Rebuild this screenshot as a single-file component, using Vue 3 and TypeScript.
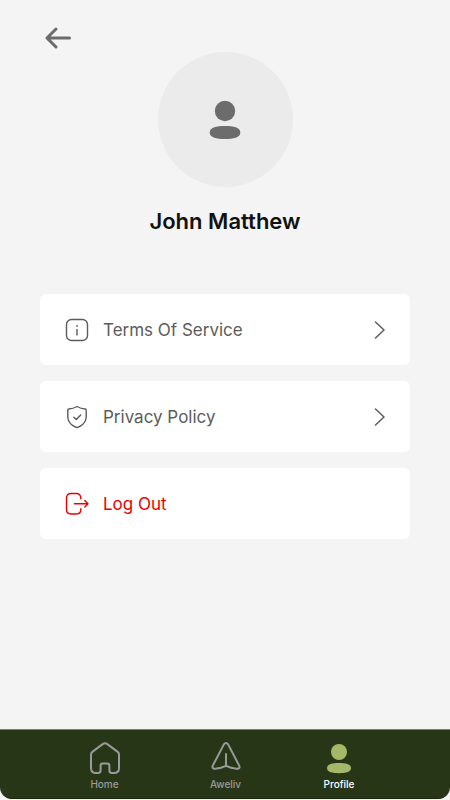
<script setup lang="ts">
import { ref } from 'vue'

type TabId = 'home' | 'aweliv' | 'profile'

interface Tab {
  id: TabId
  label: string
}

const userName = 'John Matthew'

const tabs: Tab[] = [
  { id: 'home', label: 'Home' },
  { id: 'aweliv', label: 'Aweliv' },
  { id: 'profile', label: 'Profile' },
]

const activeTab = ref<TabId>('profile')
</script>

<template>
  <div class="screen">
    <header class="top">
      <button class="back" type="button" aria-label="Back">
        <svg width="28" height="24" viewBox="0 0 28 24" fill="none" stroke="currentColor" stroke-width="3" stroke-linecap="round" stroke-linejoin="round">
          <path d="M25.5 12H3M12 3 3 12l9 9" />
        </svg>
      </button>
    </header>

    <main class="content">
      <section class="profile">
        <div class="avatar">
          <svg width="32" height="40" viewBox="0 0 32 40" fill="currentColor">
            <circle cx="16" cy="11" r="10.2" />
            <path d="M16 26c8.500 0 15.300 1.300 15.300 6.500S24.500 39 16 39 .7 37.700 .7 32.500 7.500 26 16 26Z" />
          </svg>
        </div>
        <h1 class="name">{{ userName }}</h1>
      </section>

      <nav class="menu" aria-label="Account">
        <a class="row" href="#terms">
          <svg class="row-icon" width="24" height="24" viewBox="0 0 24 24" fill="none" stroke="currentColor" stroke-width="1.4" stroke-linecap="round">
            <rect x="1.500" y="1.500" width="21" height="21" rx="5" />
            <path d="M12 11.500v5.500" />
            <circle cx="12" cy="7.900" r="0.900" fill="currentColor" stroke="none" />
          </svg>
          <span class="row-label">Terms Of Service</span>
          <svg class="chevron" width="12" height="18" viewBox="0 0 12 18" fill="none" stroke="currentColor" stroke-width="1.500" stroke-linecap="round" stroke-linejoin="round">
            <path d="m1.500 1 8.500 8-8.500 8" />
          </svg>
        </a>
        <a class="row" href="#privacy">
          <svg class="row-icon" width="24" height="24" viewBox="0 0 24 24" fill="none" stroke="currentColor" stroke-width="1.4" stroke-linecap="round" stroke-linejoin="round">
            <path d="M12 1.500c2.600 1.500 5.300 2.300 8.200 2.500q1 .1 1 1.100v7c0 5.200-4.600 9-9.200 10.600C7.400 21.100 2.800 17.300 2.800 12.100v-7q0-1 1-1.100c2.900-.2 5.600-1 8.200-2.500Z" />
            <path d="m8.800 12.200 2.500 2.400 4.400-4.700" />
          </svg>
          <span class="row-label">Privacy Policy</span>
          <svg class="chevron" width="12" height="18" viewBox="0 0 12 18" fill="none" stroke="currentColor" stroke-width="1.500" stroke-linecap="round" stroke-linejoin="round">
            <path d="m1.500 1 8.500 8-8.500 8" />
          </svg>
        </a>
        <button class="row danger" type="button">
          <svg class="row-icon" width="24" height="24" viewBox="0 0 24 24" fill="none" stroke="currentColor" stroke-width="1.400" stroke-linecap="round" stroke-linejoin="round">
            <path d="M15.800 6.800V6c0-3-1.600-4.500-4.500-4.500H6C3 1.500 1.500 3 1.500 6v11.500c0 3 1.500 4.500 4.500 4.500h5.300c2.900 0 4.500-1.500 4.500-4.500v-.8" />
            <path d="M9.500 11.700H23M19.800 8.500l3.200 3.200-3.200 3.200" />
          </svg>
          <span class="row-label">Log Out</span>
        </button>
      </nav>
    </main>

    <nav class="tabs" aria-label="Main">
      <a
        v-for="tab in tabs"
        :key="tab.id"
        class="tab"
        :class="{ active: tab.id === activeTab }"
        :href="`#${tab.id}`"
        :aria-current="tab.id === activeTab ? 'page' : undefined"
        @click.prevent="activeTab = tab.id"
      >
        <svg v-if="tab.id === 'home'" class="tab-icon" width="32" height="34" viewBox="0 0 32 34" fill="none" stroke="currentColor" stroke-width="2" stroke-linejoin="round">
          <path d="M13.700 3.100 3.600 10.600Q2 11.800 2 13.800V27q0 5 5 5h2.200q2.400 0 2.400-2.400v-4.800q0-2.200 2.200-2.200h4.400q2.200 0 2.200 2.200v4.800q0 2.400 2.400 2.400H25q5 0 5-5V13.800q0-2-1.600-3.200L18.300 3.100q-2.300-1.500-4.600 0Z" />
        </svg>
        <svg v-else-if="tab.id === 'aweliv'" class="tab-icon" width="32" height="34" viewBox="0 0 32 34" fill="none" stroke="currentColor" stroke-width="2" stroke-linecap="round" stroke-linejoin="round">
          <path d="M13.900 3.400 2.800 24.600c-1 2.200.3 3.500 2.500 3.100 3.500-.4 7-1.200 10.700-2.900 3.700 1.700 7.200 2.500 10.700 2.900 2.200.4 3.500-.9 2.500-3.100L18.100 3.400q-2.100-2.600-4.200 0ZM16 24.800V13" />
        </svg>
        <svg v-else class="tab-icon" width="32" height="34" viewBox="0 0 32 34" fill="currentColor">
          <circle cx="16" cy="11" r="8" />
          <path d="M16 22c6.600 0 12 .9 12 5.100S22.600 32.200 16 32.200 4 31.300 4 27.100 9.400 22 16 22Z" />
        </svg>
        <span class="tab-label">{{ tab.label }}</span>
      </a>
    </nav>
  </div>
</template>

<style>
body {
  background: #f4f4f4;
}
</style>

<style scoped>
.screen {
  box-sizing: border-box;
  min-height: 100vh;
  padding-bottom: 1px;
  display: flex;
  flex-direction: column;
  background: #f4f4f4;
  font-family: Inter, "Liberation Sans", sans-serif;
}

.top {
  display: flex;
  padding: 26px 44px 0;
}

.back {
  display: flex;
  padding: 0;
  border: 0;
  background: none;
  color: #6c6c6c;
  cursor: pointer;
}

.content {
  padding: 2px 40px 32px;
}

.profile {
  display: flex;
  flex-direction: column;
  align-items: center;
  gap: 20px;
}

.avatar {
  display: flex;
  align-items: center;
  justify-content: center;
  width: 135px;
  height: 135px;
  border-radius: 50%;
  background: #ebebeb;
  color: #6c6c6c;
}

.name {
  margin: 0;
  font-size: 22px;
  line-height: 28px;
  font-weight: 600;
  color: #111;
}

.menu {
  display: flex;
  flex-direction: column;
  gap: 16px;
  margin-top: 59px;
}

.row {
  box-sizing: border-box;
  display: flex;
  align-items: center;
  gap: 14px;
  width: 100%;
  min-height: 71px;
  padding: 0 24px 0 25px;
  border: 0;
  border-radius: 6px;
  background: #fff;
  color: #5c5c5c;
  font-family: inherit;
  font-size: 17px;
  line-height: 24px;
  text-align: left;
  text-decoration: none;
  cursor: pointer;
}

.row-icon,
.chevron {
  flex: none;
}

.row-label {
  flex: 1;
}

.danger {
  color: #ee0000;
}

.tabs {
  display: grid;
  grid-template-columns: 121fr 121fr 106fr;
  margin-top: auto;
  padding: 11px 58px 7px 44px;
  border-top: 1px solid #7d8276;
  border-bottom: 1px solid #1a260f;
  border-radius: 0 0 12px 12px;
  background: #283618;
}

.tab {
  display: flex;
  flex-direction: column;
  align-items: center;
  gap: 2px;
  color: #9a9a9a;
  font-size: 10px;
  font-weight: 500;
  line-height: 14px;
  text-decoration: none;
}

.tab-icon {
  display: block;
}

.active {
  color: #a5b86a;
}

.active .tab-label {
  color: #fff;
}
</style>
